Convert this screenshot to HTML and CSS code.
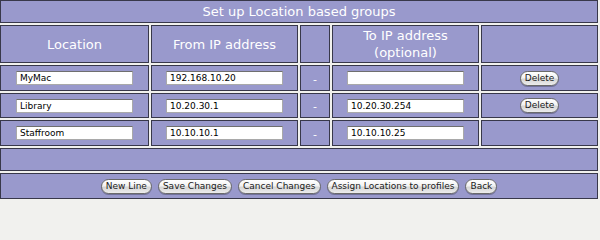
FILE: index.html
```html
<!DOCTYPE html>
<html>
<head>
<meta charset="utf-8">
<title>Set up Location based groups</title>
<link rel="stylesheet" href="styles.css">
</head>
<body>
<div class="grid">
  <div class="cell title span">Set up Location based groups</div>

  <div class="cell head">Location</div>
  <div class="cell head">From IP address</div>
  <div class="cell head"></div>
  <div class="cell head">To IP address<br>(optional)</div>
  <div class="cell head"></div>

  <div class="cell"><input class="field" type="text" value="MyMac"></div>
  <div class="cell"><input class="field" type="text" value="192.168.10.20"></div>
  <div class="cell dash">-</div>
  <div class="cell"><input class="field" type="text" value=""></div>
  <div class="cell"><button class="btn" type="button">Delete</button></div>

  <div class="cell"><input class="field" type="text" value="Library"></div>
  <div class="cell"><input class="field" type="text" value="10.20.30.1"></div>
  <div class="cell dash">-</div>
  <div class="cell"><input class="field" type="text" value="10.20.30.254"></div>
  <div class="cell"><button class="btn" type="button">Delete</button></div>

  <div class="cell"><input class="field misspelt" type="text" value="Staffroom"></div>
  <div class="cell"><input class="field" type="text" value="10.10.10.1"></div>
  <div class="cell dash">-</div>
  <div class="cell"><input class="field" type="text" value="10.10.10.25"></div>
  <div class="cell"></div>

  <div class="cell span"></div>

  <div class="cell span actions">
    <button class="btn" type="button">New Line</button>
    <button class="btn" type="button">Save Changes</button>
    <button class="btn" type="button">Cancel Changes</button>
    <button class="btn" type="button">Assign Locations to profiles</button>
    <button class="btn" type="button">Back</button>
  </div>
</div>
</body>
</html>
```

FILE: styles.css
```css
html, body {
  margin: 0;
  padding: 0;
  background: #f1f1ee;
}

body {
  font-family: "DejaVu Sans", Verdana, sans-serif;
}

.grid {
  display: grid;
  grid-template-columns: 149px 147px 30px 147px 117px;
  grid-template-rows: 23px 38px 26px 25px 26px 23px 26px;
  gap: 2px;
  width: 598px;
}

.cell {
  box-sizing: border-box;
  background: #9999cc;
  border: 1px solid #38384a;
  display: flex;
  align-items: center;
  justify-content: center;
  color: #ffffff;
}

.span {
  grid-column: 1 / -1;
}

.title {
  font-size: 13px;
  line-height: 16px;
}

.head {
  font-size: 13px;
  line-height: 17px;
  text-align: center;
}

.dash {
  font-size: 11px;
  padding-top: 2px;
}

.field {
  box-sizing: border-box;
  width: 117px;
  height: 14px;
  margin: 0;
  padding: 0 3px;
  border: 1px solid #a9a9a9;
  border-top-color: #6f6f6f;
  background: #ffffff;
  font-family: "DejaVu Sans", Verdana, sans-serif;
  font-size: 9px;
  color: #000000;
  outline: none;
}

.misspelt {
  text-decoration: underline dotted #d81818;
  text-underline-offset: 2px;
}

.btn {
  box-sizing: border-box;
  height: 15px;
  margin: 0;
  padding: 0 4px;
  border: 1px solid #6a6a6a;
  border-radius: 8px;
  background: linear-gradient(#ffffff 0%, #f2f2f2 45%, #d6d6d6 55%, #ececec 100%);
  box-shadow: 0 1px 0 rgba(40, 40, 60, 0.35);
  font-family: "DejaVu Sans", Verdana, sans-serif;
  font-size: 9px;
  line-height: 13px;
  color: #1a1a1a;
}

.actions {
  gap: 6px;
}
```
